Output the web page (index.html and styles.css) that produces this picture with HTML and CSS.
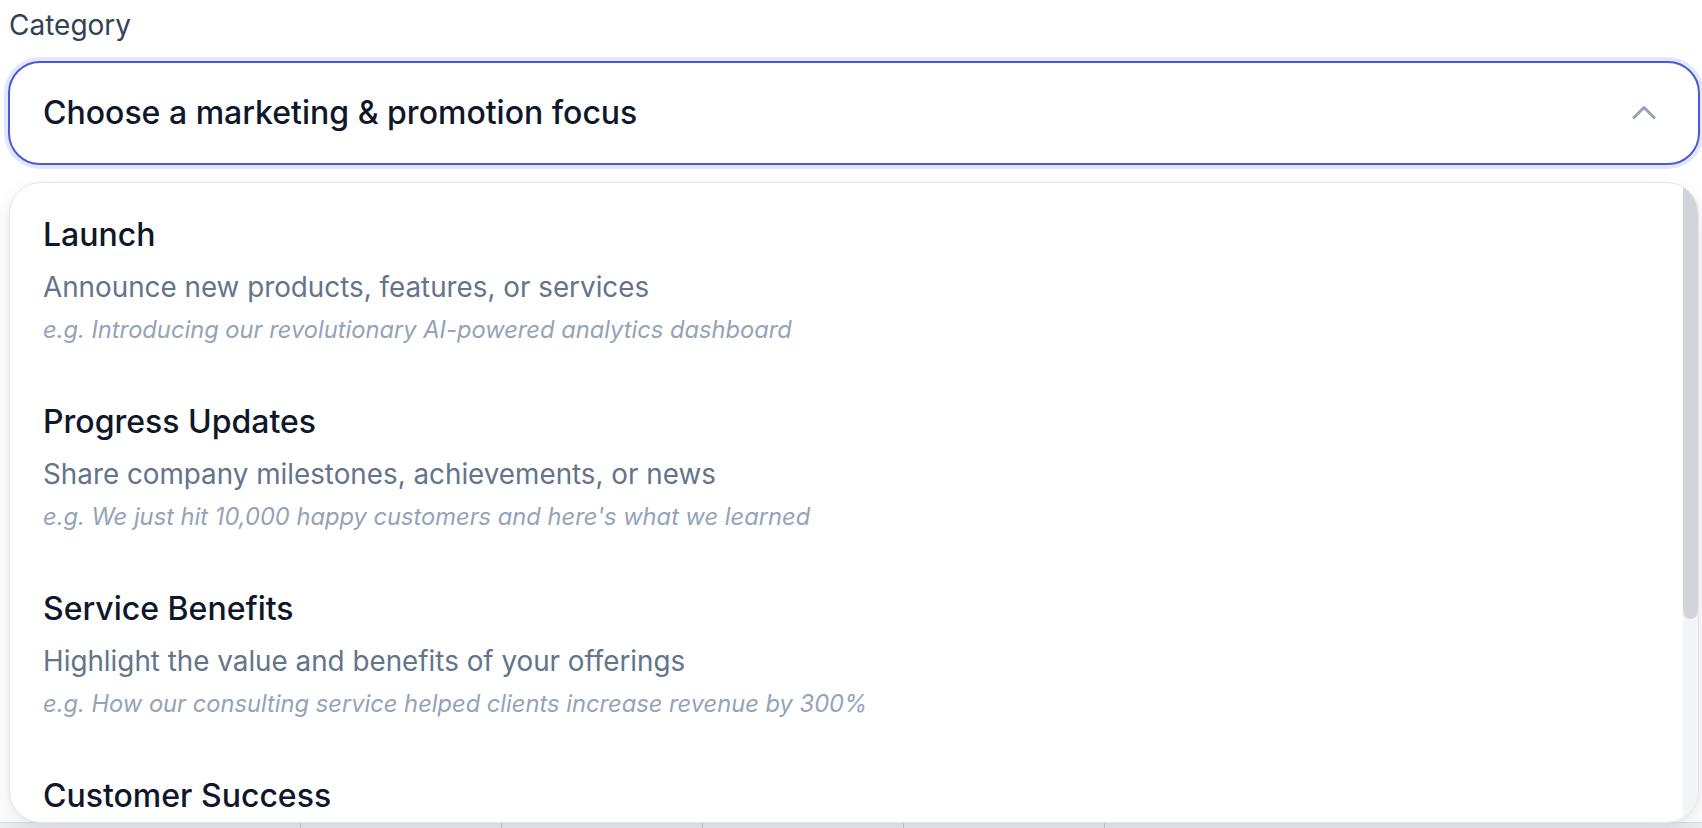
FILE: index.html
```html
<!DOCTYPE html>
<html lang="en">
<head>
<meta charset="utf-8">
<title>Category</title>
<link rel="stylesheet" href="styles.css">
</head>
<body>
<div class="field">
  <label class="label">Category</label>
  <div class="select-wrap">
    <div class="select">
      <span class="placeholder">Choose a marketing &amp; promotion focus</span>
      <svg class="chevron" width="24" height="16" viewBox="0 0 24 16" aria-hidden="true">
        <path d="M2 13.5 L12 3.5 L22 13.5" fill="none" stroke="#94a3b8" stroke-width="3" stroke-linecap="round" stroke-linejoin="round"/>
      </svg>
    </div>
    <div class="menu">
      <div class="list">
        <div class="option">
          <div class="opt-title">Launch</div>
          <div class="opt-desc">Announce new products, features, or services</div>
          <div class="opt-example">e.g. Introducing our revolutionary AI-powered analytics dashboard</div>
        </div>
        <div class="option">
          <div class="opt-title">Progress Updates</div>
          <div class="opt-desc">Share company milestones, achievements, or news</div>
          <div class="opt-example">e.g. We just hit 10,000 happy customers and here's what we learned</div>
        </div>
        <div class="option">
          <div class="opt-title">Service Benefits</div>
          <div class="opt-desc">Highlight the value and benefits of your offerings</div>
          <div class="opt-example">e.g. How our consulting service helped clients increase revenue by 300%</div>
        </div>
        <div class="option">
          <div class="opt-title">Customer Success</div>
          <div class="opt-desc">Showcase client results, testimonials, and case studies</div>
          <div class="opt-example">e.g. See how Acme Corp doubled their conversion rate in 90 days</div>
        </div>
      </div>
      <div class="scrollbar"><div class="thumb"></div></div>
    </div>
  </div>
  <div class="below">
    <span class="sep"></span>
    <span class="sep"></span>
    <span class="sep"></span>
    <span class="sep"></span>
    <span class="sep"></span>
  </div>
</div>
</body>
</html>
```

FILE: styles.css
```css
* { box-sizing: border-box; }

html, body {
  margin: 0;
  padding: 0;
  background: #ffffff;
  overflow: hidden;
}

body {
  font-family: Inter, "Noto Sans", "Liberation Sans", sans-serif;
  color: #0f172a;
}

.field {
  padding: 5px 2px 0 8px;
}

.label {
  display: block;
  font-size: 28px;
  line-height: 40px;
  color: #334155;
  padding-left: 1px;
}

.select-wrap {
  position: relative;
  margin-top: 16px;
}

.select {
  height: 104px;
  border: 2px solid #4a5ad6;
  border-radius: 32px;
  box-shadow: 0 0 0 4px #e2e7fb;
  background: #ffffff;
  display: flex;
  align-items: center;
  justify-content: space-between;
  padding: 0 42px 0 33px;
}

.placeholder {
  font-size: 32px;
  line-height: 40px;
  font-weight: 500;
  color: #0f172a;
}

.chevron {
  display: block;
  margin-top: -2px;
}

.menu {
  position: absolute;
  top: 121px;
  left: 1px;
  right: 1px;
  height: 641px;
  overflow: hidden;
  background: #ffffff;
  border: 1.5px solid #e2e6ef;
  border-radius: 32px;
  box-shadow: 0 12px 28px rgba(15, 23, 42, 0.08), 0 2px 6px rgba(15, 23, 42, 0.04);
  z-index: 10;
}

.list {
  padding: 4px 15px 4px 0;
}

.scrollbar {
  position: absolute;
  top: 0;
  right: 0;
  bottom: 0;
  width: 15px;
  background: #f3f4f6;
}

.thumb {
  height: 436px;
  background: #d1d4d9;
  border-radius: 0 0 8px 8px;
}

.option {
  padding: 28px 32px 29px 33px;
}

.opt-title {
  font-size: 32px;
  line-height: 40px;
  font-weight: 500;
  color: #0f172a;
}

.opt-desc {
  margin-top: 14px;
  font-size: 27.8px;
  line-height: 36px;
  color: #64748b;
}

.opt-example {
  margin-top: 10px;
  font-size: 23.7px;
  line-height: 30px;
  font-style: italic;
  color: #94a3b8;
}

.below {
  margin-top: 657px;
  margin-left: -8px;
  margin-right: -2px;
  height: 40px;
  background: #eceef2;
  border-top: 1px solid #dde1e8;
  display: flex;
  gap: 200px;
  padding: 0 0 0 300px;
}

.sep {
  width: 1px;
  height: 40px;
  background: #c9ced6;
}
```
